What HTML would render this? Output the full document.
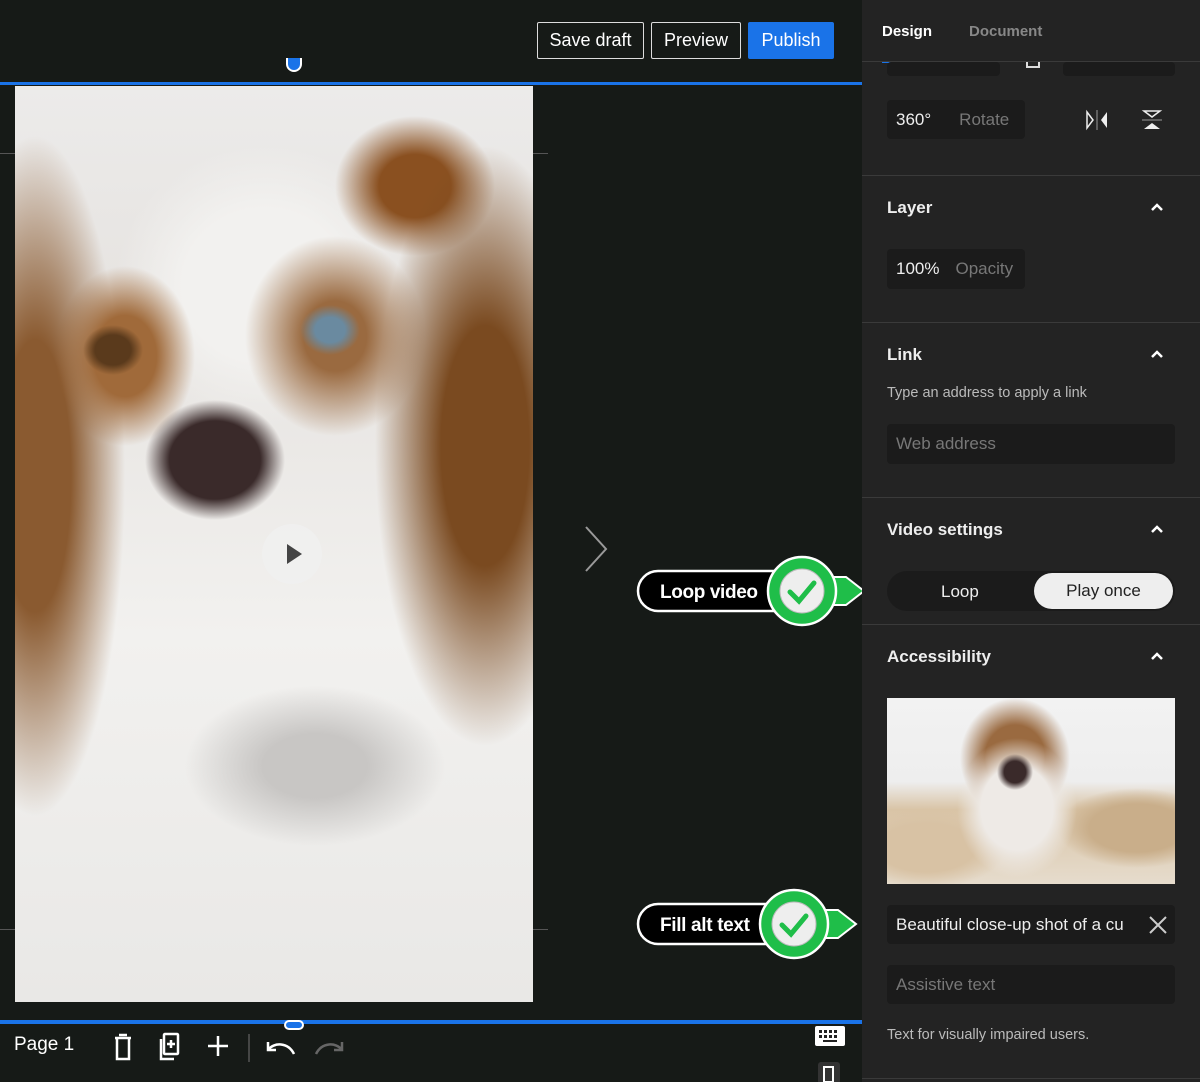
<!DOCTYPE html>
<html><head><style>
*{box-sizing:border-box;margin:0;padding:0}
body{width:1200px;height:1082px;background:#161a17;font-family:"Liberation Sans",sans-serif;position:relative;overflow:hidden;color:#fff}
.abs{position:absolute}
.btn{position:absolute;top:22px;height:37px;border:1px solid #ddd;border-radius:2px;color:#fff;font-size:18px;line-height:35px;text-align:center}
.panel{position:absolute;left:862px;top:0;width:338px;height:1082px;background:#232323}
.sep{position:absolute;left:0;width:338px;height:1px;background:#3a3a3a}
.h{position:absolute;left:25px;font-size:17px;font-weight:bold;color:#eee}
.chev{position:absolute;left:288px;width:14px;height:14px}
.inp{position:absolute;background:#1b1b1b;border-radius:4px;font-size:17px;color:#eee;padding-left:9px}
.ph{color:#777}
.dog{background:
radial-gradient(ellipse 70px 60px at 200px 374px,#3a2a2a 65%,transparent 100%),
radial-gradient(ellipse 30px 25px at 98px 264px,#5a3a1c 60%,transparent 100%),
radial-gradient(ellipse 30px 25px at 315px 244px,#6a8aa0 50%,transparent 100%),
radial-gradient(ellipse 70px 90px at 110px 270px,#a06a3a 45%,transparent 100%),
radial-gradient(ellipse 90px 100px at 320px 250px,#9a6a40 35%,transparent 100%),
radial-gradient(ellipse 90px 340px at 20px 390px,#8a5a30 40%,transparent 100%),
radial-gradient(ellipse 110px 300px at 470px 360px,#7a4a20 40%,transparent 100%),
radial-gradient(ellipse 80px 70px at 400px 100px,#8a5020 45%,transparent 100%),
radial-gradient(ellipse 150px 140px at 250px 200px,#f2f1ef 55%,transparent 100%),
radial-gradient(ellipse 130px 80px at 300px 680px,#c8c6c4 40%,transparent 100%),
linear-gradient(#ecebea 0,#e6e3e0 25%,#f2f1ef 60%,#e9e8e6 100%)}
</style></head><body>
<div class="btn" style="left:537px;width:107px">Save draft</div>
<div class="btn" style="left:651px;width:90px">Preview</div>
<div class="btn" style="left:748px;width:86px;background:#1a73e8;border-color:#1a73e8">Publish</div>
<div class="abs" style="left:0;top:82px;width:862px;height:3px;background:#1a73e8"></div>
<div class="abs" style="left:286px;top:58px;width:16px;height:14px;border-radius:0 0 8px 8px;background:#1a73e8;border:2px solid #fff;border-top:none"></div>
<div class="abs" style="left:0;top:153px;width:15px;height:1px;background:#555"></div>
<div class="abs" style="left:533px;top:153px;width:15px;height:1px;background:#555"></div>
<div class="abs" style="left:0;top:929px;width:15px;height:1px;background:#555"></div>
<div class="abs" style="left:533px;top:929px;width:15px;height:1px;background:#555"></div>
<div class="abs dog" style="left:15px;top:86px;width:518px;height:916px"></div>
<div class="abs" style="left:262px;top:524px;width:60px;height:60px;border-radius:50%;background:rgba(240,240,240,.9)"></div>
<svg class="abs" style="left:262px;top:524px" width="60" height="60"><path d="M25 20 L40 30 L25 40Z" fill="#444"/></svg>
<svg class="abs" style="left:580px;top:525px" width="30" height="50"><path d="M6 2 L26 24 L6 46" stroke="#999" stroke-width="2" fill="none"/></svg>
<svg class="abs" style="left:636px;top:555px" width="230" height="72">
<path d="M165 22 H210 L228 36 L210 50 H165Z" fill="#1fbe49" stroke="#fff" stroke-width="2"/>
<rect x="2" y="16" width="160" height="40" rx="20" fill="#000" stroke="#fff" stroke-width="2.5"/>
<text x="24" y="43" font-family="Liberation Sans" font-weight="bold" font-size="19" fill="#fff" textLength="98">Loop video</text>
<circle cx="166" cy="36" r="34" fill="#1fbe49" stroke="#fff" stroke-width="2.5"/>
<circle cx="166" cy="36" r="22" fill="#eee" stroke="#bbb" stroke-width="1"/>
<path d="M154 37 L163 46 L178 28" stroke="#1fbe49" stroke-width="5" fill="none" stroke-linecap="round"/>
</svg>
<svg class="abs" style="left:636px;top:888px" width="230" height="72">
<path d="M160 22 H202 L220 36 L202 50 H160Z" fill="#1fbe49" stroke="#fff" stroke-width="2"/>
<rect x="2" y="16" width="150" height="40" rx="20" fill="#000" stroke="#fff" stroke-width="2.5"/>
<text x="24" y="43" font-family="Liberation Sans" font-weight="bold" font-size="19" fill="#fff" textLength="90">Fill alt text</text>
<circle cx="158" cy="36" r="34" fill="#1fbe49" stroke="#fff" stroke-width="2.5"/>
<circle cx="158" cy="36" r="22" fill="#eee" stroke="#bbb" stroke-width="1"/>
<path d="M146 37 L155 46 L170 28" stroke="#1fbe49" stroke-width="5" fill="none" stroke-linecap="round"/>
</svg>
<div class="abs" style="left:0;top:1020px;width:862px;height:4px;background:#1a73e8"></div>
<div class="abs" style="left:284px;top:1020px;width:20px;height:10px;border-radius:5px;background:#1a73e8;border:2px solid #fff"></div>
<div class="abs" style="left:14px;top:1034px;font-size:19px">Page 1</div>
<svg class="abs" style="left:108px;top:1030px" width="240" height="34" fill="none" stroke="#fff" stroke-width="2.5">
<path d="M7 8 H23 M11 5 H19 M9 8 V29 H21 V8"/>
<rect x="56" y="4" width="14" height="20" rx="1"/><path d="M53 9 V29 H66 M63 10 V18 M59 14 H67"/>
<path d="M110 6 V26 M100 16 H120"/>
<path d="M141 4 V32" stroke="#555" stroke-width="1.5"/>
<path d="M160 12 L160 20 L168 20 M160 20 C166 12 180 12 186 24"/>
<path d="M234 12 L234 20 L226 20 M234 20 C228 12 214 12 208 24" stroke="#666"/>
</svg>
<svg class="abs" style="left:814px;top:1024px" width="32" height="58" fill="#fff"><rect x="1" y="2" width="30" height="20" rx="2"/><g fill="#222"><rect x="5" y="6" width="3" height="3"/><rect x="10" y="6" width="3" height="3"/><rect x="15" y="6" width="3" height="3"/><rect x="20" y="6" width="3" height="3"/><rect x="5" y="11" width="3" height="3"/><rect x="10" y="11" width="3" height="3"/><rect x="15" y="11" width="3" height="3"/><rect x="20" y="11" width="3" height="3"/><rect x="9" y="16" width="14" height="2"/></g><rect x="4" y="38" width="22" height="22" rx="3" fill="#333"/><rect x="10" y="43" width="9" height="15" fill="none" stroke="#fff" stroke-width="2"/></svg>
<div class="panel">
<div class="abs" style="left:20px;top:23px;font-size:15px;font-weight:bold;color:#fff">Design</div>
<div class="abs" style="left:107px;top:23px;font-size:15px;font-weight:bold;color:#888">Document</div>
<div class="abs" style="left:20px;top:61px;width:50px;height:2px;background:#1a73e8"></div>
<div class="sep" style="top:61px"></div>
<div class="inp" style="left:25px;top:62px;width:113px;height:14px"></div>
<div class="abs" style="left:164px;top:62px;width:14px;height:6px;border:2px solid #ddd;border-top:none"></div>
<div class="inp" style="left:201px;top:62px;width:112px;height:14px"></div>
<div class="inp" style="left:25px;top:100px;width:138px;height:39px;line-height:39px">360°<span class="ph" style="margin-left:28px">Rotate</span></div>
<svg class="abs" style="left:222px;top:108px" width="80" height="24" fill="#eee"><path d="M3 4 L9 12 L3 20Z" fill="none" stroke="#eee" stroke-width="1.5"/><path d="M13 2 V22" stroke="#999"/><path d="M23 4 L17 12 L23 20Z"/><path d="M60 3 H76 L68 9Z" fill="none" stroke="#eee" stroke-width="1.5"/><path d="M58 12 H78" stroke="#999"/><path d="M60 21 H76 L68 15Z"/></svg>
<div class="sep" style="top:175px"></div>
<div class="h" style="top:198px">Layer</div>
<svg class="chev" style="top:200px" viewBox="0 0 14 14"><path d="M2 10 L7 5 L12 10" stroke="#fff" stroke-width="2.5" fill="none"/></svg>
<div class="inp" style="left:25px;top:249px;width:138px;height:40px;line-height:40px">100%<span class="ph" style="margin-left:16px">Opacity</span></div>
<div class="sep" style="top:322px"></div>
<div class="h" style="top:345px">Link</div>
<svg class="chev" style="top:347px" viewBox="0 0 14 14"><path d="M2 10 L7 5 L12 10" stroke="#fff" stroke-width="2.5" fill="none"/></svg>
<div class="abs" style="left:25px;top:385px;font-size:14.5px;color:#bbb">Type an address to apply a link</div>
<div class="inp" style="left:25px;top:424px;width:288px;height:40px;line-height:40px"><span class="ph">Web address</span></div>
<div class="sep" style="top:497px"></div>
<div class="h" style="top:520px">Video settings</div>
<svg class="chev" style="top:522px" viewBox="0 0 14 14"><path d="M2 10 L7 5 L12 10" stroke="#fff" stroke-width="2.5" fill="none"/></svg>
<div class="abs" style="left:25px;top:571px;width:288px;height:40px;border-radius:20px;background:#1b1b1b"></div>
<div class="abs" style="left:79px;top:582px;font-size:17px;color:#eee">Loop</div>
<div class="abs" style="left:172px;top:573px;width:139px;height:36px;border-radius:18px;background:#eee;color:#222;font-size:17px;text-align:center;line-height:36px">Play once</div>
<div class="sep" style="top:624px"></div>
<div class="h" style="top:647px">Accessibility</div>
<svg class="chev" style="top:649px" viewBox="0 0 14 14"><path d="M2 10 L7 5 L12 10" stroke="#fff" stroke-width="2.5" fill="none"/></svg>
<div class="abs" style="left:25px;top:698px;width:288px;height:186px;background:
radial-gradient(ellipse 18px 18px at 128px 74px,#3a2a2a 60%,transparent 100%),
radial-gradient(ellipse 60px 70px at 130px 110px,#eeeae6 60%,transparent 100%),
radial-gradient(ellipse 55px 60px at 128px 60px,#9a6a40 55%,transparent 100%),
radial-gradient(ellipse 80px 40px at 40px 150px,#d8c2a4 60%,transparent 100%),
radial-gradient(ellipse 80px 40px at 250px 130px,#c9ae8a 60%,transparent 100%),
linear-gradient(#f2f2f2 0,#eeeeee 45%,#d9c4a6 60%,#e6dccd 100%)"></div>
<div class="inp" style="left:25px;top:905px;width:288px;height:39px;line-height:39px;overflow:hidden;white-space:nowrap">Beautiful close-up shot of a cu</div>
<svg class="abs" style="left:287px;top:916px" width="18" height="18"><path d="M1 1 L17 17 M17 1 L1 17" stroke="#ccc" stroke-width="2"/></svg>
<div class="inp" style="left:25px;top:965px;width:288px;height:39px;line-height:39px"><span class="ph">Assistive text</span></div>
<div class="abs" style="left:25px;top:1027px;font-size:14.5px;color:#bbb">Text for visually impaired users.</div>
<div class="sep" style="top:1078px"></div>
</div>
</body></html>
